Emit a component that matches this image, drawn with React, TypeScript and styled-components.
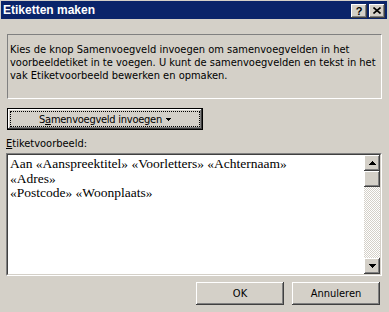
import React from 'react';
import styled, { createGlobalStyle } from 'styled-components';

const Global = createGlobalStyle`
  html, body { margin: 0; padding: 0; background: #d4d0c8; }
  body {
    width: 389px; height: 312px; overflow: hidden;
    font-family: "DejaVu Sans Condensed", "DejaVu Sans", sans-serif; font-size: 11px; color: #000;
  }
`;

const Window = styled.div`
  width: 389px; height: 312px; box-sizing: border-box; background: #d4d0c8;
  display: flex; flex-direction: column; padding: 1px 2px 0 1px;
`;

const TitleBar = styled.div`
  height: 18px; background: #0a246a; display: flex; align-items: flex-start;
  padding: 0 2px; gap: 2px; flex-shrink: 0;
`;

const Title = styled.div`
  flex: 1; color: #fff; font-family: "Liberation Sans", Arial, sans-serif;
  font-weight: bold; font-size: 12px; line-height: 18px; white-space: nowrap;
`;

const bevel = `
  box-shadow: inset -1px -1px #404040, inset 1px 1px #ffffff,
    inset -2px -2px #808080, inset 2px 2px #d4d0c8;
`;

const CaptionButton = styled.div`
  width: 16px; height: 14px; margin-top: 3px; box-sizing: border-box;
  background: #d4d0c8; ${bevel}
  display: flex; align-items: center; justify-content: center;
  font-family: "Liberation Sans", Arial, sans-serif;
  font-weight: bold; font-size: 11px; line-height: 14px; padding-bottom: 1px;
`;

const Content = styled.div`
  flex: 1; display: flex; flex-direction: column; padding: 15px 5px 0 5px;
`;

const InfoBox = styled.div`
  margin-left: 1px; height: 65px; box-sizing: border-box;
  border: 1px solid; border-color: #808080 #ffffff #ffffff #808080;
  padding: 8px 2px 0 2px; line-height: 13px; white-space: nowrap;
`;

const MergeButton = styled.div`
  margin: 9px 0 0 1px; width: 196px; height: 22px; box-sizing: border-box;
  border: 1px solid #000; background: #d4d0c8; position: relative;
  box-shadow: inset -1px -1px #404040, inset 1px 1px #ffffff, inset -2px -2px #808080;
  display: flex; align-items: center; justify-content: center; gap: 4px;
  letter-spacing: -0.25px;
  &::after {
    content: ''; position: absolute; inset: 2px;
    border: 1px dotted #000;
  }
`;

const Mnemonic = styled.span`
  text-decoration: underline; text-underline-offset: 1px;
`;

const Label = styled.div`
  margin-top: 7px; line-height: 13px; height: 13px;
`;

const TextArea = styled.div`
  margin-top: 3px; height: 123px; box-sizing: border-box; background: #fff;
  border: 1px solid; border-color: #808080 #ffffff #ffffff #808080;
  display: flex;
`;

const TextInner = styled.div`
  flex: 1; display: flex;
  border: 1px solid; border-color: #404040 #d4d0c8 #d4d0c8 #404040;
`;

const TextContent = styled.div`
  flex: 1; padding: 2px 2px 0 2px;
  font-family: "Liberation Serif", "Times New Roman", serif; font-size: 13.5px; line-height: 14.5px;
`;

const ScrollBar = styled.div`
  width: 16px; display: flex; flex-direction: column;
`;

const ScrollBtn = styled.div`
  width: 16px; height: 16px; box-sizing: border-box; background: #d4d0c8; ${bevel}
  display: flex; align-items: center; justify-content: center; flex-shrink: 0;
`;

const Track = styled.div`
  flex: 1;
  background: repeating-conic-gradient(#d4d0c8 0 25%, #ffffff 0 50%) 0 0 / 2px 2px;
`;

const Footer = styled.div`
  margin-top: 6px; margin-right: 2px; display: flex; justify-content: flex-end; gap: 8px;
`;

const PushButton = styled.div`
  width: 88px; height: 23px; box-sizing: border-box; background: #d4d0c8; ${bevel}
  display: flex; align-items: center; justify-content: center; padding-bottom: 1px;
`;

const Arrow = ({ up }: { up?: boolean }) => (
  <svg width="7" height="4" viewBox="0 0 7 4" style={{ display: 'block' }}>
    <path d={up ? 'M3.5 0 L7 4 L0 4 Z' : 'M0 0 L7 0 L3.5 4 Z'} fill="#000" shapeRendering="crispEdges" />
  </svg>
);

const SmallArrow = () => (
  <svg width="5" height="3" viewBox="0 0 5 3" style={{ display: 'block' }}>
    <path d="M0 0 L5 0 L2.5 3 Z" fill="#000" shapeRendering="crispEdges" />
  </svg>
);

export default function App() {
  return (
    <>
      <Global />
      <Window>
        <TitleBar>
          <Title>Etiketten maken</Title>
          <CaptionButton>?</CaptionButton>
          <CaptionButton>
            <svg width="8" height="7" viewBox="0 0 8 7" style={{ display: 'block' }}>
              <path d="M0.5 0.5 L7.5 6.5 M7.5 0.5 L0.5 6.5" stroke="#000" strokeWidth="1.6" />
            </svg>
          </CaptionButton>
        </TitleBar>
        <Content>
          <InfoBox>
            Kies de knop Samenvoegveld invoegen om samenvoegvelden in het
            <br />
            voorbeeldetiket in te voegen. U kunt de samenvoegvelden en tekst in het
            <br />
            vak Etiketvoorbeeld bewerken en opmaken.
          </InfoBox>
          <MergeButton>
            <span>
              S<Mnemonic>a</Mnemonic>menvoegveld invoegen
            </span>
            <SmallArrow />
          </MergeButton>
          <Label>
            <Mnemonic>E</Mnemonic>tiketvoorbeeld:
          </Label>
          <TextArea>
            <TextInner>
              <TextContent>
                Aan «Aanspreektitel» «Voorletters» «Achternaam»
                <br />
                «Adres»
                <br />
                «Postcode» «Woonplaats»
              </TextContent>
              <ScrollBar>
                <ScrollBtn>
                  <Arrow up />
                </ScrollBtn>
                <ScrollBtn />
                <Track />
                <ScrollBtn>
                  <Arrow />
                </ScrollBtn>
              </ScrollBar>
            </TextInner>
          </TextArea>
          <Footer>
            <PushButton>OK</PushButton>
            <PushButton>Annuleren</PushButton>
          </Footer>
        </Content>
      </Window>
    </>
  );
}
